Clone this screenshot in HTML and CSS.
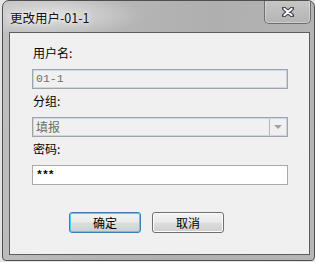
FILE: index.html
```html
<!DOCTYPE html>
<html>
<head>
<meta charset="utf-8">
<link rel="stylesheet" href="styles.css">
</head>
<body>
<div class="window">
  <div class="titlebar">
    <span class="title">更改用户-01-1</span>
    <div class="close">
      <svg width="12" height="10" viewBox="0 0 12 10">
        <path d="M2 1.5 L10 8.5 M10 1.5 L2 8.5" stroke="#3d4250" stroke-width="4.2" stroke-linecap="round"/>
        <path d="M2.3 1.8 L9.7 8.2 M9.7 1.8 L2.3 8.2" stroke="#ffffff" stroke-width="2" stroke-linecap="round"/>
      </svg>
    </div>
  </div>
  <div class="client">
    <div class="field">
      <label class="label">用户名:</label>
      <div class="box disabled"><span class="val">01-1</span></div>
    </div>
    <div class="field">
      <label class="label">分组:</label>
      <div class="box disabled combo">
        <span class="val cjk">填报</span>
        <span class="drop"><svg width="8" height="5" viewBox="0 0 8 5"><path d="M0 0 H8 L4 4 Z" fill="#a0a0a0"/></svg></span>
      </div>
    </div>
    <div class="field">
      <label class="label">密码:</label>
      <div class="box pwd"><span class="val stars">***</span></div>
    </div>
    <div class="buttons">
      <div class="btn default">确定</div>
      <div class="btn">取消</div>
    </div>
  </div>
</div>
</body>
</html>
```
FILE: styles.css
```css
html, body {
  margin: 0;
  padding: 0;
}
body {
  background: #e4e4e4;
  width: 315px;
  height: 262px;
  overflow: hidden;
  font-family: "Noto Sans CJK SC", "DejaVu Sans", sans-serif;
  font-size: 12px;
}
.window {
  margin-left: 2px;
  width: 311px;
  height: 259px;
  border: 1px solid #4f4f4f;
  border-radius: 7px 7px 4px 4px;
  background: linear-gradient(100deg, #c0c0c0 0%, #b5b5b5 35%, #afafaf 60%, #b6b6b6 100%);
  display: flex;
  flex-direction: column;
}
.titlebar {
  height: 31px;
  display: flex;
  align-items: flex-start;
  background: radial-gradient(ellipse 90px 22px at 50px 14px, rgba(235,235,235,0.75), rgba(235,235,235,0) 100%);
  border-radius: 6px 6px 0 0;
}
.title {
  margin-left: 7px;
  margin-top: 9px;
  line-height: 16px;
  font-size: 12.5px;
  color: #111;
  text-shadow: 0 0 6px #f4f4f4, 0 0 3px #f4f4f4;
}
.close {
  margin-left: auto;
  margin-right: 3px;
  width: 45px;
  height: 22px;
  border: 1px solid #6e6e6e;
  border-top: none;
  border-radius: 0 0 5px 5px;
  background: linear-gradient(#c6c6c6, #b4b4b4);
  box-shadow: inset 0 -1px 0 rgba(255,255,255,0.35), inset 1px 0 0 rgba(255,255,255,0.3), inset -1px 0 0 rgba(255,255,255,0.3);
  display: flex;
  align-items: center;
  justify-content: center;
}
.close svg {
  margin-top: -1px;
}
.client {
  margin: 0 4px 5px 6px;
  flex: 1;
  border: 1px solid #5d5d5d;
  background: #f0f0f0;
  padding: 13px 0 0 22px;
  display: flex;
  flex-direction: column;
}
.field {
  display: flex;
  flex-direction: column;
  margin-bottom: 5px;
}
.label {
  line-height: 14px;
  height: 14px;
  margin-left: 1px;
  margin-bottom: 9px;
  color: #000;
  font-size: 12px;
}
.box {
  width: 254px;
  height: 18px;
  border: 1px solid #a3a3a3;
  display: flex;
  align-items: center;
  position: relative;
}
.box.disabled {
  background: #f0f0f0;
  box-shadow: inset 0 0 0 1px #c5d9ee;
  color: #6d6d6d;
}
.box.pwd {
  background: #ffffff;
  border-color: #a9a9a9;
  color: #000;
}
.val {
  margin-left: 3px;
  font-family: "Liberation Mono", "DejaVu Sans Mono", monospace;
  font-size: 11.5px;
  line-height: 14px;
}
.val.stars {
  letter-spacing: -1px;
  font-weight: bold;
}
.val.cjk {
  font-family: "Noto Sans CJK SC", sans-serif;
  font-size: 12px;
}
.drop {
  margin-left: auto;
  width: 16px;
  height: 16px;
  margin-right: 1px;
  border-left: 1px solid #b4b4b4;
  background: #f0f0f0;
  display: flex;
  align-items: center;
  justify-content: center;
}
.buttons {
  margin-top: 22px;
  margin-left: 37px;
  display: flex;
  gap: 11px;
}
.btn {
  width: 70px;
  height: 19px;
  border: 1px solid #707070;
  border-radius: 3px;
  background: linear-gradient(#f2f2f2 0%, #ebebeb 48%, #dddddd 52%, #cfcfcf 100%);
  box-shadow: inset 0 0 0 1px #fcfcfc;
  display: flex;
  align-items: center;
  justify-content: center;
  font-size: 12px;
  color: #000;
  line-height: 14px;
}
.btn.default {
  border-color: #3c7fb1;
  box-shadow: inset 0 0 0 1px #48d0f5;
}
```
